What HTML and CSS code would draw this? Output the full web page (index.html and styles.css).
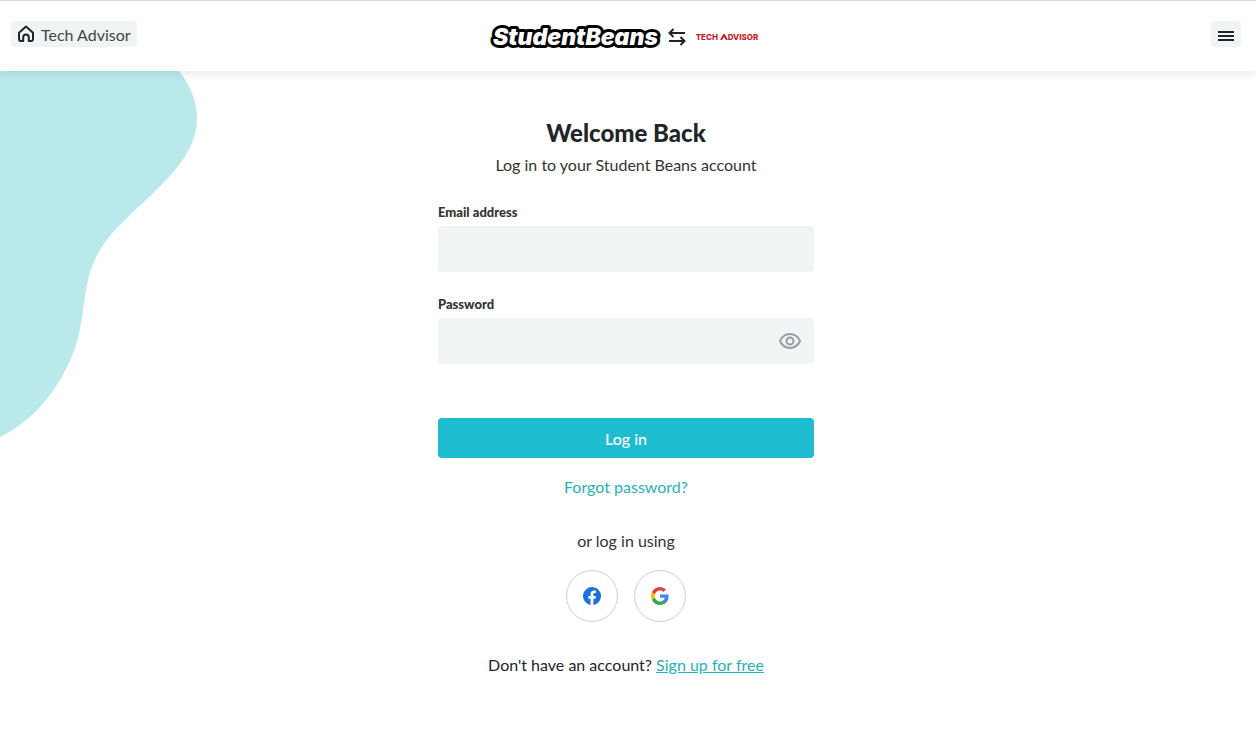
FILE: index.html
```html
<!DOCTYPE html>
<html lang="en">
<head>
    <meta charset="utf-8">
    <meta name="viewport" content="width=device-width, initial-scale=1">
    <title>Log in - Student Beans</title>
    <link rel="stylesheet" href="styles.css">
</head>
<body>
    <header class="header">
        <a class="home" href="#">
            <svg width="18" height="18" viewBox="0 0 18 18" fill="none" stroke="#212529" stroke-width="2" stroke-linejoin="round">
                <path d="M2 7.800 9 1.500l7 6.300V14a2 2 0 0 1-2 2h-2.200v-3.600a2.800 2.800 0 0 0-5.600 0V16H4a2 2 0 0 1-2-2z"/>
            </svg>
            <span>Tech Advisor</span>
        </a>
        <div class="brands">
            <a class="logo" href="#">
                <svg width="170" height="28" viewBox="0 0 170 28"><text x="3" y="22">StudentBeans</text></svg>
            </a>
            <svg width="18" height="18" viewBox="0 0 18 18" fill="none" stroke="#222" stroke-width="2">
                <path d="M17 5H2M5.500 1 1.500 5l4 4M1 13h15M12.500 9l4 4-4 4"/>
            </svg>
            <span class="partner">TECH <svg width="8" height="6" viewBox="0 0 8 6" fill="none" stroke="#bf1e2e" stroke-width="2"><path d="M1 6 4 1l3 5"/></svg>DVISOR</span>
        </div>
        <button class="menu" type="button" aria-label="Menu">
            <svg width="16" height="12" viewBox="0 0 16 12" fill="#212529">
                <path d="M0 1h16v2H0zM0 5h16v2H0zM0 9h16v2H0z"/>
            </svg>
        </button>
    </header>

    <main class="main">
        <svg class="blob" width="200" height="368" viewBox="0 0 200 368" fill="#b9e9eb">
            <path d="M0 0H179C190 14 197 30 197 48C197 90 150 123 120 154C104 170 94 185 88 209C83 230 83 252 76 274C66 306 39 348 0 366Z"/>
        </svg>

        <div class="login">
            <h1>Welcome Back</h1>
            <p class="intro">Log in to your Student Beans account</p>

            <form>
                <div class="field">
                    <label for="email">Email address</label>
                    <input type="email" id="email" name="email">
                </div>
                <div class="field">
                    <label for="password">Password</label>
                    <div class="password">
                        <input type="password" id="password" name="password">
                        <button class="show" type="button" aria-label="Show password">
                            <svg width="22" height="16" viewBox="0 0 22 16" fill="none" stroke="#979da0" stroke-width="2">
                                <path d="M1 8C3 3.600 6.700 1 11 1s8 2.600 10 7c-2 4.400-5.700 7-10 7S3 12.400 1 8z"/>
                                <circle cx="11" cy="8" r="3.500"/>
                            </svg>
                        </button>
                    </div>
                </div>
                <button class="submit" type="submit">Log in</button>
            </form>

            <p class="forgot"><a href="#">Forgot password?</a></p>
            <p class="using">or log in using</p>

            <div class="social">
                <a href="#" aria-label="Facebook">
                    <svg width="18" height="18" viewBox="0 0 24 24" fill="#1b72da">
                        <path d="M24 12a12 12 0 1 0-13.900 11.900v-8.400H7.100V12h3V9.400c0-3 1.800-4.700 4.500-4.700 1.300 0 2.700.2 2.700.2v3h-1.500c-1.500 0-2 .9-2 1.900V12h3.400l-.5 3.500h-2.900v8.400A12 12 0 0 0 24 12z"/>
                    </svg>
                </a>
                <a href="#" aria-label="Google">
                    <svg width="18" height="18" viewBox="0 0 24 24">
                        <path fill="#4285f4" d="M23.500 12.300c0-.9-.1-1.600-.2-2.400H12v4.500h6.500a5.600 5.600 0 0 1-2.400 3.700v3h3.900c2.200-2.100 3.500-5.100 3.500-8.800z"/>
                        <path fill="#34a853" d="M12 24c3.200 0 6-1.100 8-2.900l-3.900-3a7.200 7.200 0 0 1-10.800-3.800h-4v3.100A12 12 0 0 0 12 24z"/>
                        <path fill="#fbbc05" d="M5.300 14.300a7.200 7.200 0 0 1 0-4.600V6.600h-4a12 12 0 0 0 0 10.800z"/>
                        <path fill="#d9453d" d="M12 4.800c1.800 0 3.400.6 4.600 1.800L20 3.200A12 12 0 0 0 1.300 6.600l4 3.100A7.200 7.200 0 0 1 12 4.800z"/>
                    </svg>
                </a>
            </div>

            <p class="signup">Don't have an account? <a href="#">Sign up for free</a></p>
        </div>
    </main>
</body>
</html>
```

FILE: styles.css
```css
* {box-sizing:border-box;}
body {margin:0; background-color:#fff; font-family:Lato, sans-serif; font-size:16px; line-height:24px; color:#333;}
h1, p {margin:0;}
button, input {font-family:inherit; font-size:16px; border:0;}
button {cursor:pointer;}
svg {display:block;}

/* header */
.header {position:relative; z-index:1; display:grid; grid-template-columns:1fr auto 1fr; align-items:center; height:71px; padding:0 15px 0 11px; background-color:#fff; border-top:1px solid #d9d9d9; box-shadow:0 2px 10px rgba(0,0,0,0.1);}
.home {justify-self:start; display:flex; align-items:center; gap:6px; height:26px; padding:0 6px; margin-bottom:4px; border-radius:4px; background-color:#f0f4f5; color:#444; text-decoration:none;}
.home span {padding-top:2px;}
.brands {display:flex; align-items:center; gap:8px; padding:2px 4px 0 0;}
.logo text {font-family:Inter, sans-serif; font-size:23px; font-weight:900; font-style:italic; fill:#fff; stroke:#000; stroke-width:6px; stroke-linejoin:round; paint-order:stroke fill;}
.logo svg {overflow:visible;}
.partner {display:flex; align-items:baseline; padding-left:2px; font-family:Inter, sans-serif; font-size:8px; font-weight:800; color:#bf1e2e; white-space:pre;}
.menu {justify-self:end; display:flex; align-items:center; justify-content:center; width:30px; height:26px; padding:4px 0 0; margin-bottom:4px; border-radius:4px; background-color:#f0f4f5;}

/* login */
.main {position:relative; padding:46px 4px 58px 0;}
.blob {position:absolute; top:0; left:0;}
.login {position:relative; max-width:376px; margin:0 auto; text-align:center;}
h1 {font-size:24px; line-height:32px; font-weight:900; color:#212529;}
.intro {margin-top:4px;}
form {margin-top:25px; text-align:left;}
.field {margin-bottom:22px;}
.field label {display:block; margin-bottom:4px; font-size:13px; line-height:20px; font-weight:900;}
.field input {display:block; width:100%; height:46px; padding:0 12px; border-radius:4px; background-color:#f0f4f5;}
.password {position:relative;}
.show {position:absolute; top:0; right:0; height:46px; padding:0 13px; background:none;}
.submit {display:block; width:100%; height:40px; margin-top:54px; border-radius:4px; background-color:#1ebccf; color:#fff; font-weight:500;}
a {color:#2bb0b5;}
.forgot {margin-top:17px;}
.forgot a {text-decoration:none;}
.using {margin-top:30px;}
.social {display:flex; justify-content:center; gap:16px; margin-top:17px;}
.social a {display:flex; align-items:center; justify-content:center; width:52px; height:52px; border:1px solid #d0d0d0; border-radius:50%; background-color:#fff;}
.signup {margin-top:31px; color:#212529;}
```
